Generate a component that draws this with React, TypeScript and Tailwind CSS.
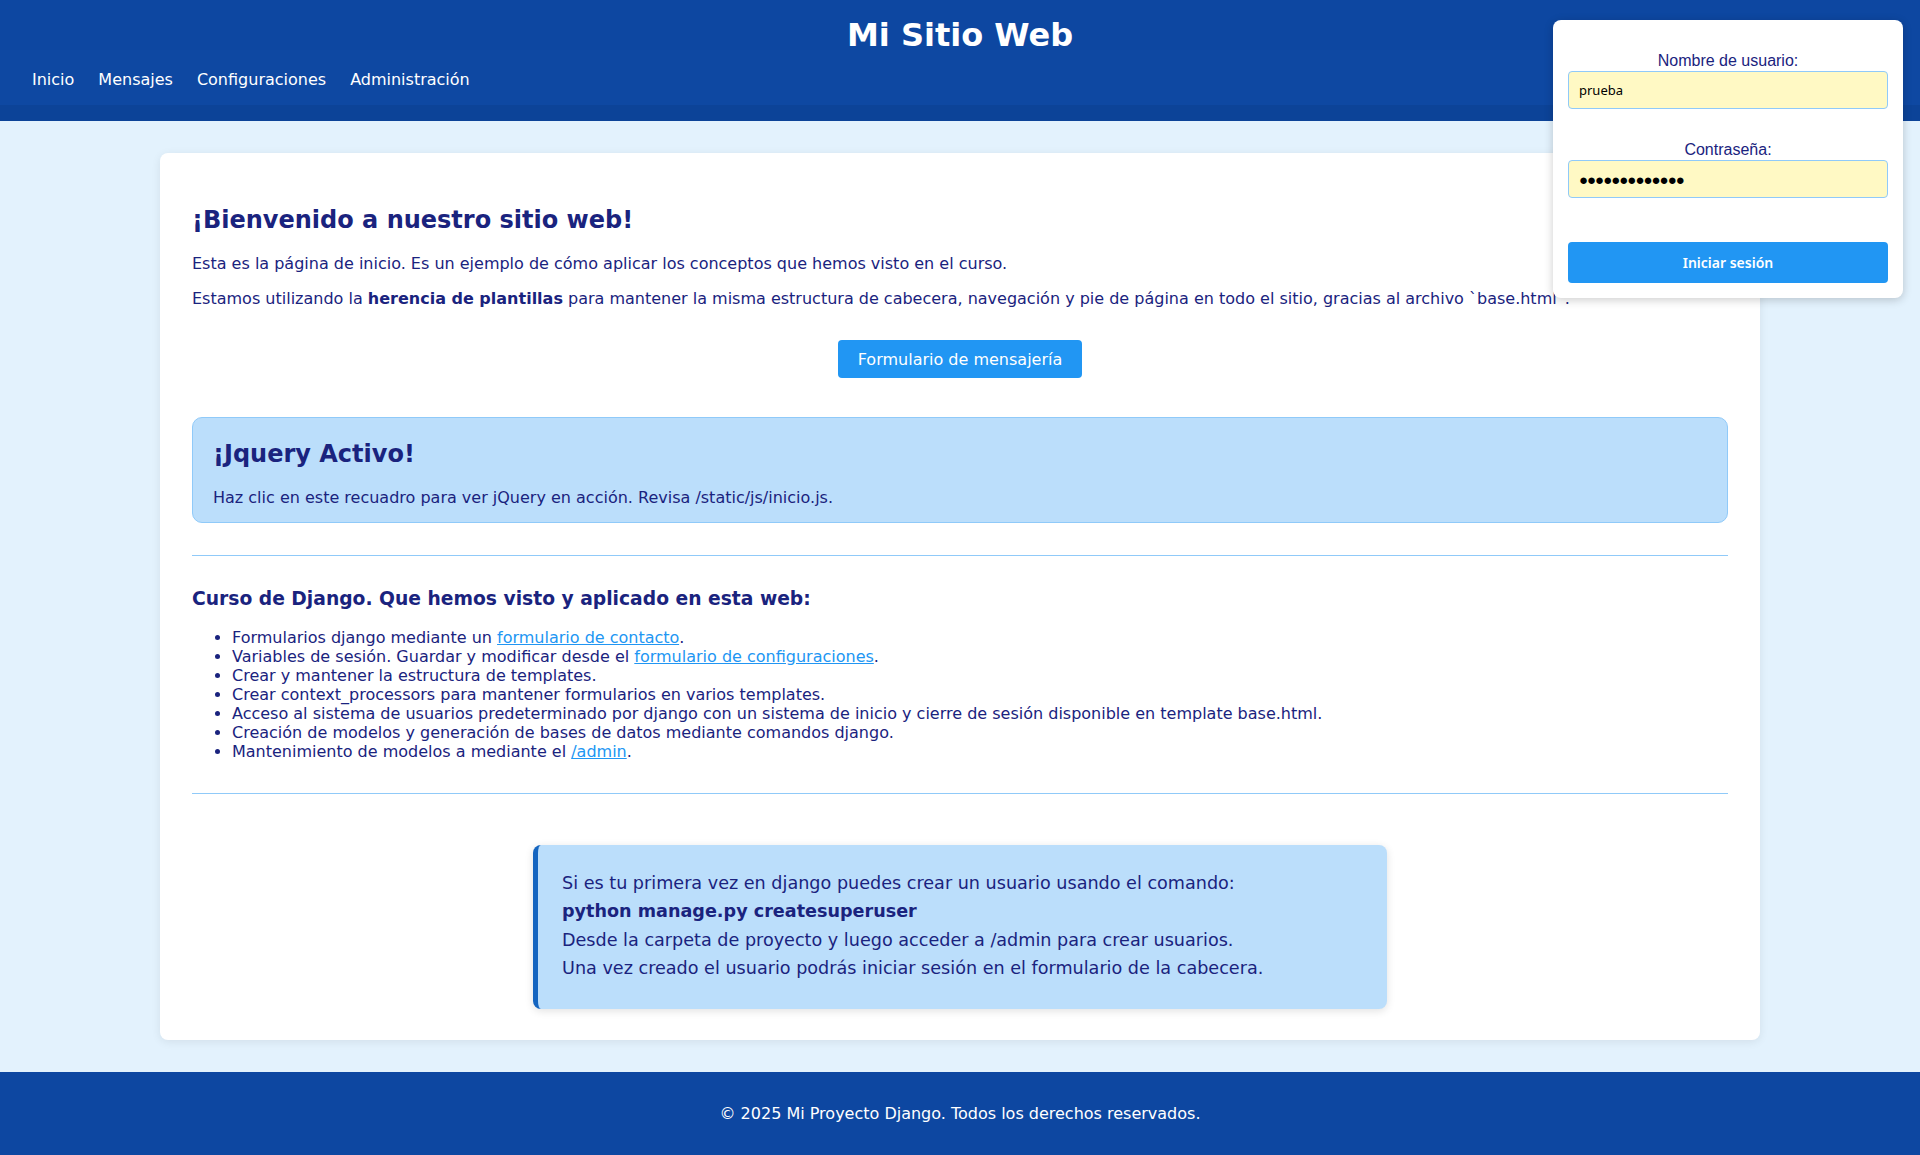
import React from 'react'

const navLinks = ['Inicio', 'Mensajes', 'Configuraciones', 'Administración']

const Header = () => {
  return (
    <header className="bg-[#0d47a1] text-white">
      <div className="h-[50px] pt-[17px]">
        <h1 className="text-[32px] leading-[37px] font-bold text-center">Mi Sitio Web</h1>
      </div>
      <nav className="h-[55px] flex items-center gap-6 pl-8 pt-[3px] bg-[#0e48a2]">
        {navLinks.map((link) => (
          <a key={link} href="#" className="text-[16px] text-white">
            {link}
          </a>
        ))}
      </nav>
      <div className="h-[16px] bg-[#0c4398]"></div>
    </header>
  )
}

const LoginBox = () => {
  return (
    <div className="absolute top-[20px] right-[17px] w-[350px] h-[278px] bg-white rounded-lg shadow-[0_2px_10px_rgba(0,0,0,0.2)] px-[15px] pt-[32px] flex flex-col font-['Liberation_Sans',sans-serif]">
      <label className="text-[16px] leading-[18px] text-center text-[#1a237e]">Nombre de usuario:</label>
      <input
        type="text"
        defaultValue="prueba"
        className="mt-[1px] h-[38px] w-full rounded border border-[#90caf9] bg-[#fff9c4] px-[10px] text-[13px] text-black font-['Noto_Sans',sans-serif] outline-none"
      />
      <label className="mt-[32px] text-[16px] leading-[18px] text-center text-[#1a237e]">Contraseña:</label>
      <input
        type="text"
        defaultValue="●●●●●●●●●●●●●"
        className="mt-[1px] h-[38px] w-full rounded border border-[#90caf9] bg-[#fff9c4] px-[10px] text-[15px] tracking-[-1px] text-black font-['Liberation_Sans',sans-serif] outline-none"
      />
      <button className="mt-[44px] h-[41px] w-full rounded bg-[#2196f3] text-white text-[14px] font-semibold font-['Noto_Sans',sans-serif]">
        Iniciar sesión
      </button>
    </div>
  )
}

const JqueryBox = () => {
  return (
    <div className="mt-[39px] rounded-[10px] border border-[#90caf9] bg-[#bbdefb] px-5 pt-[22px] pb-[15px]">
      <h2 className="text-[24px] leading-[28px] font-bold text-[#1a237e]">¡Jquery Activo!</h2>
      <p className="mt-5 text-[16px]">Haz clic en este recuadro para ver jQuery en acción. Revisa /static/js/inicio.js.</p>
    </div>
  )
}

const Link = (props: { children: React.ReactNode }) => {
  return (
    <a href="#" className="text-[#2196f3] underline">
      {props.children}
    </a>
  )
}

const CourseList = () => {
  return (
    <>
      <h3 className="mt-[32px] text-[18.72px] leading-[22px] font-bold">Curso de Django. Que hemos visto y aplicado en esta web:</h3>
      <ul className="mt-[18px] list-disc pl-10 text-[16px] leading-[normal]">
        <li>Formularios django mediante un <Link>formulario de contacto</Link>.</li>
        <li>Variables de sesión. Guardar y modificar desde el <Link>formulario de configuraciones</Link>.</li>
        <li>Crear y mantener la estructura de templates.</li>
        <li>Crear context_processors para mantener formularios en varios templates.</li>
        <li>Acceso al sistema de usuarios predeterminado por django con un sistema de inicio y cierre de sesión disponible en template base.html.</li>
        <li>Creación de modelos y generación de bases de datos mediante comandos django.</li>
        <li>Mantenimiento de modelos a mediante el <Link>/admin</Link>.</li>
      </ul>
    </>
  )
}

const NoteBox = () => {
  return (
    <div className="mx-auto mt-[51px] w-[854px] rounded-lg border-l-[5px] border-[#1565c0] bg-[#bbdefb] pl-6 pr-6 pt-6 pb-[26px] text-[17.6px] leading-[28.4px] shadow-[0_2px_8px_rgba(0,0,0,0.12)]">
      <p>Si es tu primera vez en django puedes crear un usuario usando el comando:</p>
      <p className="font-bold">python manage.py createsuperuser</p>
      <p>Desde la carpeta de proyecto y luego acceder a /admin para crear usuarios.</p>
      <p>Una vez creado el usuario podrás iniciar sesión en el formulario de la cabecera.</p>
    </div>
  )
}

const App = () => {
  return (
    <div className="relative min-h-screen flex flex-col bg-[#e3f2fd] text-[#1a237e] leading-[normal] font-['DejaVu_Sans',sans-serif]">
      <Header />
      <main className="py-8 px-[160px]">
        <div className="bg-white rounded-lg shadow-[0_2px_10px_rgba(0,0,0,0.08)] px-8 pt-[53px] pb-[31px]">
          <h2 className="text-[24px] leading-[28px] font-bold">¡Bienvenido a nuestro sitio web!</h2>
          <p className="mt-[20px] text-[16px]">Esta es la página de inicio. Es un ejemplo de cómo aplicar los conceptos que hemos visto en el curso.</p>
          <p className="mt-4 text-[16px]">
            Estamos utilizando la <strong>herencia de plantillas</strong> para mantener la misma estructura de cabecera, navegación y pie de página en todo el sitio, gracias al archivo `base.html`.
          </p>
          <div className="mt-8 flex justify-center">
            <button className="h-[38px] rounded bg-[#2196f3] px-5 text-[16px] text-white">Formulario de mensajería</button>
          </div>
          <JqueryBox />
          <hr className="mt-8 border-0 border-t border-[#90caf9]" />
          <CourseList />
          <hr className="mt-[32px] border-0 border-t border-[#90caf9]" />
          <NoteBox />
        </div>
      </main>
      <footer className="h-[84px] flex items-center justify-center bg-[#0d47a1] text-white text-[16px]">
        © 2025 Mi Proyecto Django. Todos los derechos reservados.
      </footer>
      <LoginBox />
    </div>
  )
}

export default App
